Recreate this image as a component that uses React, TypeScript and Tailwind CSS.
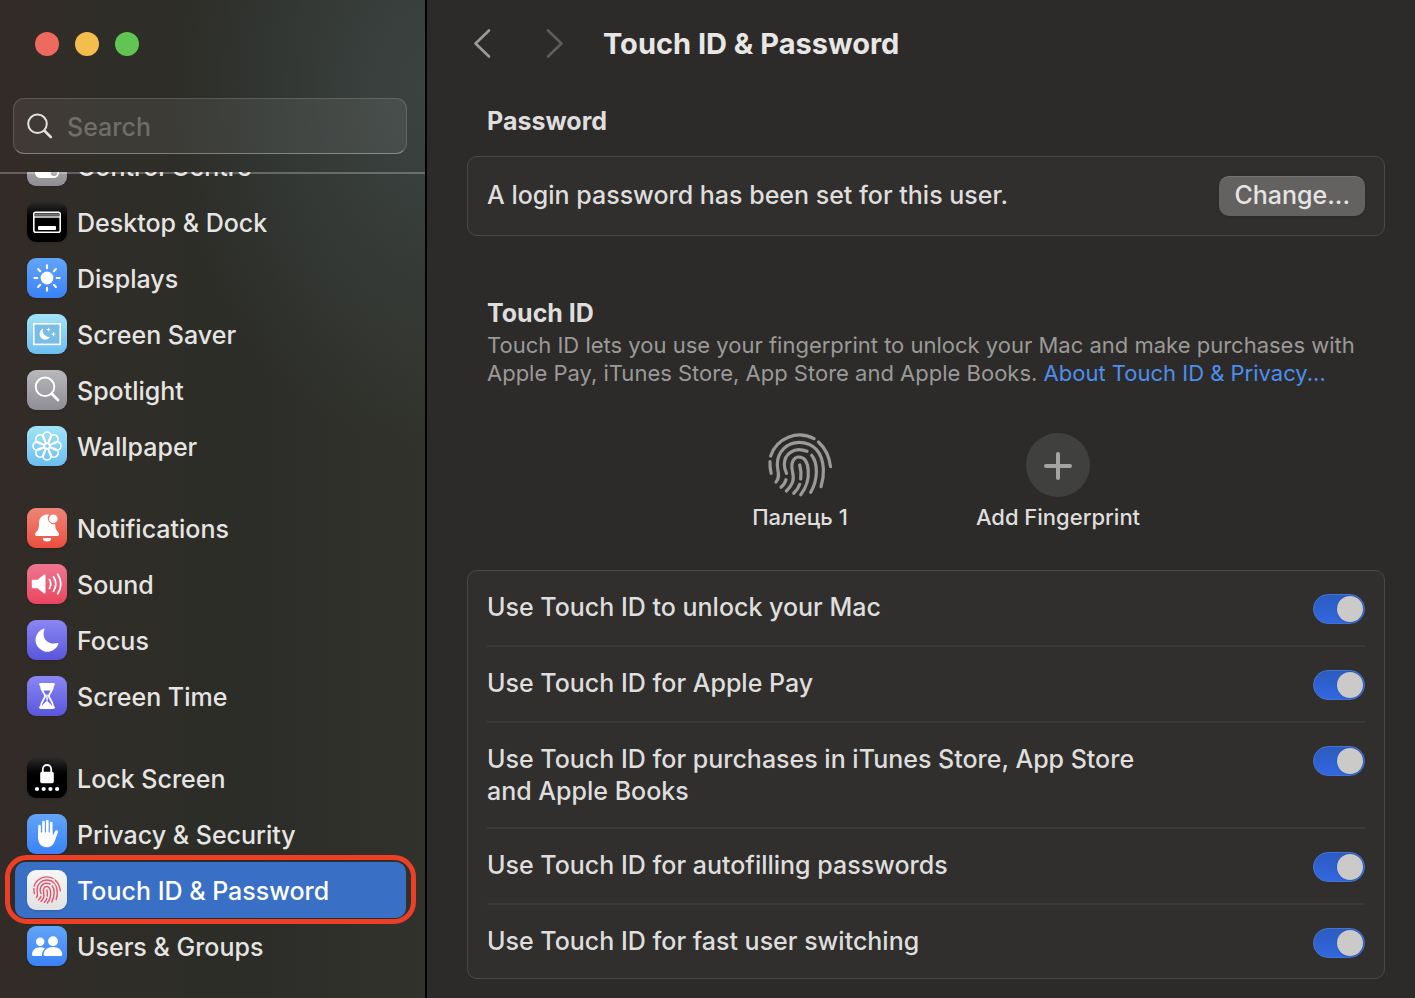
import React, { useState } from 'react'

type IconName =
  | 'control'
  | 'dock'
  | 'displays'
  | 'saver'
  | 'spotlight'
  | 'wallpaper'
  | 'notifications'
  | 'sound'
  | 'focus'
  | 'screentime'
  | 'lock'
  | 'privacy'
  | 'touchid'
  | 'users'

interface SidebarEntry {
  label: string
  icon: IconName
  tile: string
}

const BLUE = 'from-[#62a4f8] to-[#3a82f7]'
const CYAN = 'from-[#a2e4f8] to-[#6cbdf0]'
const GREY = 'from-[#b9b8bd] to-[#8f8e94]'
const BLACK = 'from-[#2a2a2a] to-black to-60%'
const PURPLE = 'from-[#8b86f2] to-[#5a56dc]'

const groups: SidebarEntry[][] = [
  [
    { label: 'Control Centre', icon: 'control', tile: GREY },
    { label: 'Desktop & Dock', icon: 'dock', tile: BLACK },
    { label: 'Displays', icon: 'displays', tile: BLUE },
    { label: 'Screen Saver', icon: 'saver', tile: CYAN },
    { label: 'Spotlight', icon: 'spotlight', tile: GREY },
    { label: 'Wallpaper', icon: 'wallpaper', tile: CYAN }
  ],
  [
    {
      label: 'Notifications',
      icon: 'notifications',
      tile: 'from-[#ee8478] to-[#eb4d3d]'
    },
    { label: 'Sound', icon: 'sound', tile: 'from-[#ee7590] to-[#ea445f]' },
    { label: 'Focus', icon: 'focus', tile: PURPLE },
    { label: 'Screen Time', icon: 'screentime', tile: PURPLE }
  ],
  [
    { label: 'Lock Screen', icon: 'lock', tile: BLACK },
    { label: 'Privacy & Security', icon: 'privacy', tile: BLUE },
    {
      label: 'Touch ID & Password',
      icon: 'touchid',
      tile: 'from-[#f6f6f6] to-[#e2e2e2]'
    },
    { label: 'Users & Groups', icon: 'users', tile: BLUE }
  ]
]

const touchOptions = [
  'Use Touch ID to unlock your Mac',
  'Use Touch ID for Apple Pay',
  'Use Touch ID for purchases in iTunes Store, App Store and Apple Books',
  'Use Touch ID for autofilling passwords',
  'Use Touch ID for fast user switching'
]

const fingerprintPaths = [
  'M2.7 23 A30.5 30.5 0 0 1 46 5.7',
  'M50.5 9 C57.5 15.5 61.5 24 62.5 33.7',
  'M2 28.7 C1.8 32.5 2.2 36.5 3.2 40.3',
  'M8 49 C12.8 43.8 9.3 38 9.3 31 A21.9 21.9 0 0 1 31 9.3 C46 9.3 54.5 20 55.4 36 C55.7 42 54.8 48 53 53.7',
  'M18.5 40.3 C17 37 16.3 35 16.3 31.5 C16.3 21 26 13.2 39 18.3',
  'M43.7 22.3 C49.8 30 50.4 46 42.7 59.3',
  'M18.3 58 C25.5 51 26.3 46 24.4 38 C22.6 30 25.5 24 31 24 C36.5 24 39.5 29 40.2 37 C41 46 38 55 32.7 61.7',
  'M13 54.3 C15.5 52.3 17.2 50 18 46.7',
  'M25.7 60.3 C28.8 57.5 30.6 54.7 31.7 51.3',
  'M31.7 32 C33 36.5 33.4 41 32.7 46'
]

const Fingerprint = ({ className }: { className?: string }) => (
  <svg
    viewBox="0 0 64 64"
    className={className}
    fill="none"
    stroke="currentColor"
    strokeWidth="3.2"
    strokeLinecap="round"
    aria-hidden="true"
  >
    {fingerprintPaths.map((d) => (
      <path key={d} d={d} />
    ))}
  </svg>
)

const Glyph = ({ name }: { name: IconName }) => {
  switch (name) {
    case 'control':
      return (
        <>
          <rect x="8" y="8" width="24" height="10" rx="5" fill="none" stroke="#fff" strokeWidth="2" />
          <rect x="8" y="21" width="24" height="11" rx="5.5" fill="#fff" />
          <circle cx="27" cy="26.5" r="3.4" fill="#a3a2a7" />
        </>
      )
    case 'dock':
      return (
        <>
          <rect x="6.8" y="10.3" width="26.4" height="20" rx="2" fill="none" stroke="#fff" strokeWidth="1.6" />
          <path d="M7.5 12.6h25" stroke="#777" strokeWidth="2.4" />
          <path d="M7 15h26" stroke="#fff" strokeWidth="1.4" />
          <rect x="11" y="24" width="18" height="4" rx=".8" fill="#fff" />
        </>
      )
    case 'displays':
      return (
        <>
          <circle cx="20" cy="20" r="6.4" fill="#fff" />
          {[0, 45, 90, 135, 180, 225, 270, 315].map((a) => (
            <path
              key={a}
              d="M20 7.4v2.9"
              stroke="#fff"
              strokeWidth="2.1"
              strokeLinecap="round"
              transform={`rotate(${a} 20 20)`}
            />
          ))}
        </>
      )
    case 'saver':
      return (
        <>
          <rect x="6.8" y="9.8" width="26.4" height="20.6" fill="#79bde6" stroke="#fff" strokeWidth="1.6" />
          <path d="M16.2 14.6a5.7 5.7 0 1 0 7 8.1 6 6 0 0 1-7-8.1z" fill="#fff" />
          <path d="M21.5 13.2l.6 1.8 1.8.6-1.8.6-.6 1.8-.6-1.8-1.8-.6 1.8-.6zM26.4 17.4l.7 2 2 .7-2 .7-.7 2-.7-2-2-.7 2-.7z" fill="#fff" />
        </>
      )
    case 'spotlight':
      return (
        <>
          <circle cx="18" cy="16.8" r="9.3" fill="none" stroke="#fff" strokeWidth="1.9" />
          <path d="M24.8 23.8l6.2 6.2" stroke="#fff" strokeWidth="2.7" strokeLinecap="round" />
        </>
      )
    case 'wallpaper':
      return (
        <>
          {[0, 45, 90, 135, 180, 225, 270, 315].map((a) => (
            <path
              key={a}
              d="M20 18C17.4 14.8 15.8 12.4 15.8 10.2a4.2 4.2 0 0 1 8.4 0c0 2.2-1.6 4.6-4.2 7.8z"
              fill="none"
              stroke="#fff"
              strokeWidth="1.7"
              transform={`rotate(${a} 20 20)`}
            />
          ))}
          <circle cx="20" cy="20" r="2.6" fill="#86cbf2" stroke="#fff" strokeWidth="1.5" />
        </>
      )
    case 'notifications':
      return (
        <>
          <path
            d="M20 6.6c-4.8 0-8 3.7-8 8.8 0 4.7-.9 6.6-2.4 8.2-1.1 1.2-1.5 2-1.5 2.9 0 1 .7 1.5 1.7 1.5h20.5c1 0 1.7-.5 1.7-1.5 0-.9-.5-1.7-1.5-2.9-1.4-1.6-2.3-3.5-2.4-7.5a6 6 0 0 1-6.2-9.3c-.6-.1-1.2-.2-1.9-.2z"
            fill="#fff"
          />
          <circle cx="26.3" cy="10.8" r="4.3" fill="#fff" />
          <path d="M15.8 30h8.4a4.2 3.5 0 0 1-8.4 0z" fill="#fff" />
        </>
      )
    case 'sound':
      return (
        <>
          <path
            d="M6 15.8h4.6l6-5c.8-.7 1.9-.3 1.9.8v16.8c0 1.1-1.1 1.5-1.9.8l-6-5H6c-.8 0-1.2-.4-1.2-1.2v-6c0-.8.4-1.2 1.2-1.2z"
            fill="#fff"
          />
          <path
            d="M22.4 15.6c1.7 2.7 1.7 6.1 0 8.8M26.5 12.8c2.8 4.4 2.8 10 0 14.4M30.7 10.2c3.9 6.1 3.9 13.5 0 19.6"
            fill="none"
            stroke="#fff"
            strokeWidth="1.8"
            strokeLinecap="round"
          />
        </>
      )
    case 'focus':
      return (
        <path
          d="M16.6 8.7c.7-.3 1.1.1.8.8-3.3 8.6 3.2 15.9 13.2 13.6.8-.2 1.1.3.8.9A11.8 11.8 0 1 1 16.6 8.7z"
          fill="#fff"
        />
      )
    case 'screentime':
      return (
        <>
          <path
            d="M13.5 8.5h13M13.5 31.5h13"
            stroke="#fff"
            strokeWidth="2.8"
            strokeLinecap="round"
          />
          <path
            d="M13.8 9c0 5.5 3.6 7.5 4.4 11-.8 3.5-4.4 5.5-4.4 11h12.4c0-5.5-3.6-7.5-4.4-11 .8-3.5 4.4-5.5 4.4-11z"
            fill="#6f6be6"
            stroke="#fff"
            strokeWidth="1.8"
          />
          <path d="M14 9h12c0 2-.8 3.8-2 5.4h-8c-1.2-1.6-2-3.4-2-5.4z" fill="#fff" />
          <path d="M20 18.5v6" stroke="#fff" strokeWidth="1.4" />
          <path d="M20 24.5c.8 1.8 4.2 3 5 5.8H15c.8-2.8 4.2-4 5-5.8z" fill="#fff" />
        </>
      )
    case 'lock':
      return (
        <>
          <rect x="13.2" y="13.8" width="13.6" height="11.4" rx="1.6" fill="#fff" />
          <path d="M15.8 14.5v-3.3a4.2 4.2 0 0 1 8.4 0v3.3" fill="none" stroke="#fff" strokeWidth="1.8" />
          {[10, 16.7, 23.4, 30.1].map((cx) => (
            <circle key={cx} cx={cx} cy="31" r="2.1" fill="#fff" />
          ))}
        </>
      )
    case 'privacy':
      return (
        <>
          <path
            d="M12.5 12.2v12M16.5 8.2v14M20.3 7.2v14M24.2 9v14"
            stroke="#fff"
            strokeWidth="2.7"
            strokeLinecap="round"
          />
          <path
            d="M11.2 18.5h14.4v3.6c.8-1.2 1.5-3 2.3-4.6.5-1.1 1.3-1.5 2.1-1.2.9.3 1.2 1.2.8 2.3l-2.9 8.2c-1.5 4.3-4 6.5-8.2 6.5-5.2 0-8.5-3.5-8.5-9.2z"
            fill="#fff"
          />
        </>
      )
    case 'users':
      return (
        <>
          <circle cx="13.2" cy="15.8" r="4.2" fill="#fff" />
          <path d="M5 28.5c0-4.4 3.7-7.2 8.2-7.2 1.9 0 3.5.5 4.9 1.3-2 1.7-3.1 3.9-3.1 6.4 0 .4.1.7.2 1H6.4c-.9 0-1.4-.6-1.4-1.5z" fill="#fff" />
          <circle cx="26" cy="15.2" r="4.9" fill="#fff" />
          <path d="M16.6 28.5c0-4.5 4.2-7.5 9.4-7.5s9.2 3 9.2 7.5c0 .9-.5 1.5-1.4 1.5H18c-.9 0-1.4-.6-1.4-1.5z" fill="#fff" />
        </>
      )
    default:
      return null
  }
}

const Tile = ({ entry }: { entry: SidebarEntry }) => (
  <span
    className={`flex size-10 shrink-0 items-center justify-center rounded-[9px] bg-linear-to-b shadow-sm ${entry.tile}`}
  >
    {entry.icon === 'touchid' ? (
      <Fingerprint className="size-7 text-[#e0566f]" />
    ) : (
      <svg viewBox="0 0 40 40" className="size-10" aria-hidden="true">
        <Glyph name={entry.icon} />
      </svg>
    )}
  </span>
)

const SidebarRow = ({
  entry,
  selected,
  onSelect
}: {
  entry: SidebarEntry
  selected: boolean
  onSelect: () => void
}) => (
  <li className="relative">
    <button
      type="button"
      onClick={onSelect}
      className={`flex h-14 w-full items-center gap-[10px] rounded-[10px] px-3 text-left text-[25px] ${
        selected ? 'bg-[#396fc5] text-white' : 'text-[#e6e5e4]'
      }`}
    >
      <Tile entry={entry} />
      <span className="pt-[3px] whitespace-nowrap">{entry.label}</span>
    </button>
    {selected && (
      <span className="pointer-events-none absolute -inset-x-[10px] -top-[7px] -bottom-[6px] rounded-[22px] border-5 border-[#ec3f25]" />
    )}
  </li>
)

const Toggle = ({
  id,
  checked,
  onChange
}: {
  id: string
  checked: boolean
  onChange: () => void
}) => (
  <span className="relative mt-[3px] h-[30px] w-[52px] shrink-0">
    <input
      id={id}
      type="checkbox"
      role="switch"
      checked={checked}
      onChange={onChange}
      className="peer block h-full w-full appearance-none rounded-full border border-[#4474d0] bg-[#555] checked:bg-linear-to-b checked:from-[#2c5cc0] checked:to-[#3267e0]"
    />
    <span className="pointer-events-none absolute top-[2px] left-[2px] size-[26px] rounded-full bg-[#cbcac9] shadow peer-checked:left-6" />
  </span>
)

const App: React.FC = () => {
  const [selected, setSelected] = useState('Touch ID & Password')
  const [search, setSearch] = useState('')
  const [enabled, setEnabled] = useState<boolean[]>(touchOptions.map(() => true))

  const toggle = (index: number) =>
    setEnabled(enabled.map((on, i) => (i === index ? !on : on)))

  return (
    <div className="flex h-screen overflow-hidden bg-[#2c2b29] font-['Inter','Noto_Sans',sans-serif] font-medium text-[#dfdedd]">
      <aside className="flex w-[427px] shrink-0 flex-col border-r-2 border-black bg-[radial-gradient(ellipse_60%_36%_at_100%_9%,#3b4341_0%,#3b434100_100%),linear-gradient(90deg,#332b27_0%,#2f2d27_24%,#2c2d28_60%,#31322c_100%)]">
        <div className="relative z-10 -mb-[2px] border-b-2 border-white/25 px-[13px] pt-8 pb-[18px]">
          <div className="flex gap-4 px-[22px]">
            <button type="button" aria-label="Close" className="size-6 rounded-full bg-[#ed6a5e]" />
            <button type="button" aria-label="Minimise" className="size-6 rounded-full bg-[#f4be4f]" />
            <button type="button" aria-label="Zoom" className="size-6 rounded-full bg-[#61c554]" />
          </div>
          <label className="mt-[42px] mr-[5px] flex h-14 items-center gap-[13px] rounded-[11px] border border-white/15 border-b-white/35 bg-white/7 px-3">
            <svg viewBox="0 0 28 28" className="size-7 shrink-0" fill="none" stroke="#e3e2e1" strokeLinecap="round" aria-hidden="true">
              <circle cx="11.5" cy="11.8" r="9.3" strokeWidth="2" />
              <path d="M18.4 18.8l6.4 6.2" strokeWidth="2.6" />
            </svg>
            <input
              type="text"
              aria-label="Search"
              placeholder="Search"
              value={search}
              onChange={(e) => setSearch(e.target.value)}
              className="w-full min-w-0 bg-transparent pt-[3px] text-[25px] outline-none placeholder:text-[#6f6e69]"
            />
          </label>
        </div>

        <nav className="min-h-0 flex-1 overflow-hidden">
          <div className="-mt-[34px] flex flex-col gap-[26px] pr-[19px] pl-[15px]">
            {groups.map((entries) => (
              <ul key={entries[0].label}>
                {entries.map((entry) => (
                  <SidebarRow
                    key={entry.label}
                    entry={entry}
                    selected={entry.label === selected}
                    onSelect={() => setSelected(entry.label)}
                  />
                ))}
              </ul>
            ))}
          </div>
        </nav>
      </aside>

      <main className="min-w-0 flex-1 pr-[30px] pl-10">
        <header className="flex h-[87px] items-center">
          <button type="button" aria-label="Back" className="text-[#9b9a98]">
            <svg viewBox="0 0 32 32" className="size-8" fill="none" stroke="currentColor" strokeWidth="2.6" strokeLinecap="round" strokeLinejoin="round">
              <path d="M22 2.500L8.500 15.500 22 28.500" />
            </svg>
          </button>
          <button type="button" aria-label="Forward" disabled className="ml-10 text-[#5e5d5b]">
            <svg viewBox="0 0 32 32" className="size-8" fill="none" stroke="currentColor" strokeWidth="2.6" strokeLinecap="round" strokeLinejoin="round">
              <path d="M9 2.500l13.500 13L9 28.500" />
            </svg>
          </button>
          <h1 className="ml-8 text-[29px] font-bold text-[#e8e7e6]">Touch ID &amp; Password</h1>
        </header>

        <section className="pt-[18px]">
          <h2 className="px-5 text-[25px] leading-8 font-bold">Password</h2>
          <div className="mt-[19px] flex h-20 items-center justify-between rounded-[10px] border border-[#4a4947] bg-[#302f2d] px-[19px]">
            <p className="text-[25px]">A login password has been set for this user.</p>
            <button
              type="button"
              className="h-10 rounded-[10px] border-t border-[#757473] bg-[#636261] px-[15px] pb-1 text-[25px] leading-8 text-[#e6e5e4] shadow-sm"
            >
              Change...
            </button>
          </div>
        </section>

        <section className="pt-[61px]">
          <div className="px-5">
            <h2 className="text-[25px] leading-8 font-bold">Touch ID</h2>
            <p className="mt-[2px] text-[22px] leading-7 font-normal text-[#9b9a98]">
              Touch ID lets you use your fingerprint to unlock your Mac and make purchases with Apple Pay,
              iTunes Store, App Store and Apple Books.{' '}
              <a href="#privacy" className="text-[#4d8ff0]">
                About Touch ID &amp; Privacy...
              </a>
            </p>
          </div>

          <div className="mt-[46px] flex justify-center gap-8 pl-[6px]">
            <button type="button" className="flex w-[226px] flex-col items-center gap-2 text-[22px] leading-6">
              <Fingerprint className="size-16 text-[#9b9a98]" />
              Палець 1
            </button>
            <button type="button" className="flex w-[226px] flex-col items-center gap-2 text-[22px] leading-6">
              <span className="flex size-16 items-center justify-center rounded-full bg-[#40403e]">
                <svg viewBox="0 0 32 32" className="size-8" stroke="#a5a4a2" strokeWidth="4" strokeLinecap="round" aria-hidden="true">
                  <path d="M16 5v24M4 17h24" />
                </svg>
              </span>
              Add Fingerprint
            </button>
          </div>

          <ul className="mt-[41px] rounded-[10px] border border-[#4a4947] bg-[#302f2d] px-[19px]">
            {touchOptions.map((option, i) => (
              <li
                key={option}
                className="flex min-h-[76px] items-start justify-between border-b-2 border-[#3a3937] py-5 last:min-h-[72px] last:border-b-0"
              >
                <label htmlFor={`touch-${i}`} className="max-w-[680px] text-[25px] leading-8">
                  {option}
                </label>
                <Toggle id={`touch-${i}`} checked={enabled[i]} onChange={() => toggle(i)} />
              </li>
            ))}
          </ul>
        </section>
      </main>
    </div>
  )
}

export default App
